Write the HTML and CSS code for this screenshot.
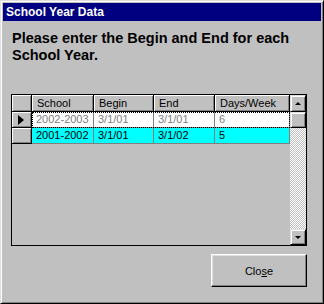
FILE: index.html
```html
<!DOCTYPE html>
<html lang="en">
<head>
  <meta charset="UTF-8">
  <title>School Year Data</title>
  <link rel="stylesheet" href="styles.css">
</head>
<body>
  <div class="window">
    <div class="title-bar">School Year Data</div>
    <div class="content">
      <p class="prompt">Please enter the Begin and End for each School Year.</p>
      <div class="grid-frame">
        <div class="grid">
          <div class="row head">
            <div class="selector"></div>
            <div class="cells">
              <div class="cell">School</div>
              <div class="cell">Begin</div>
              <div class="cell">End</div>
              <div class="cell">Days/Week</div>
            </div>
          </div>
          <div class="row current">
            <div class="selector"><span class="pointer"></span></div>
            <div class="cells">
              <div class="cell">2002-2003</div>
              <div class="cell">3/1/01</div>
              <div class="cell">3/1/01</div>
              <div class="cell">6</div>
            </div>
          </div>
          <div class="row selected">
            <div class="selector"></div>
            <div class="cells">
              <div class="cell">2001-2002</div>
              <div class="cell">3/1/01</div>
              <div class="cell">3/1/02</div>
              <div class="cell">5</div>
            </div>
          </div>
        </div>
        <div class="scrollbar">
          <div class="scroll-btn"><span class="arrow up"></span></div>
          <div class="scroll-thumb"></div>
          <div class="scroll-track"></div>
          <div class="scroll-btn"><span class="arrow down"></span></div>
        </div>
      </div>
      <div class="actions">
        <button class="btn">Clo<u>s</u>e</button>
      </div>
    </div>
  </div>
</body>
</html>
```

FILE: styles.css
```css
body {
  margin: 0;
  background-color: #c0c0c0;
  font-family: "Liberation Sans", Arial, sans-serif;
}

.window {
  width: 324px;
  height: 304px;
  box-sizing: border-box;
  border: 1px solid;
  border-color: #dfdfdf #000 #000 #dfdfdf;
  box-shadow: inset 1px 1px #fff, inset -1px -1px #808080;
  padding: 2px;
  display: flex;
  flex-direction: column;
}

.title-bar {
  height: 18px;
  background-color: #000080;
  color: #fff;
  font-weight: bold;
  font-size: 12px;
  line-height: 18px;
  padding-left: 3px;
}

.content {
  flex: 1;
  padding: 0 14px 0 8px;
  display: flex;
  flex-direction: column;
}

.prompt {
  margin: 9px 0 0 1px;
  font-size: 14.5px;
  font-weight: bold;
  line-height: 17px;
  color: #000;
  width: 290px;
}

.grid-frame {
  margin-top: 30px;
  height: 152px;
  box-sizing: border-box;
  border: 1px solid #000;
  display: flex;
}

.grid {
  flex: 1;
  font-size: 11px;
}

.row {
  display: flex;
  height: 16px;
}

.row.head {
  height: 17px;
}

.selector {
  width: 20px;
  box-sizing: border-box;
  background-color: #c0c0c0;
  border-right: 1px solid #000;
  border-bottom: 1px solid #000;
  box-shadow: inset 1px 1px #fff, inset -1px -1px #808080;
  display: flex;
  align-items: center;
  justify-content: center;
}

.pointer {
  width: 0;
  height: 0;
  border-top: 5px solid transparent;
  border-bottom: 5px solid transparent;
  border-left: 6px solid #000;
  margin-left: -2px;
}

.cells {
  display: grid;
  grid-template-columns: 62px 60px 61px 75px;
  box-sizing: border-box;
}

.cell {
  box-sizing: border-box;
  padding-left: 4px;
  line-height: 15px;
  border-right: 1px solid #808080;
  border-bottom: 1px solid #808080;
  white-space: nowrap;
  overflow: hidden;
}

.head .cell {
  padding-left: 5px;
  line-height: 17px;
  background-color: #c0c0c0;
  color: #000;
  border-right-color: #000;
  border-bottom-color: #000;
  box-shadow: inset 1px 1px #fff, inset -1px -1px #808080;
}

.current .cells {
  background-color: #fff;
  color: #808080;
  outline: 1px dotted #000;
  outline-offset: -1px;
}

.selected .cells {
  background-color: #00ffff;
  color: #000;
}

.scrollbar {
  width: 16px;
  display: flex;
  flex-direction: column;
}

.scroll-btn,
.scroll-thumb {
  height: 16px;
  box-sizing: border-box;
  background-color: #c0c0c0;
  border: 1px solid;
  border-color: #dfdfdf #000 #000 #dfdfdf;
  box-shadow: inset 1px 1px #fff, inset -1px -1px #808080;
  display: flex;
  align-items: center;
  justify-content: center;
}

.scroll-btn:first-child {
  height: 17px;
}

.scroll-track {
  flex: 1;
  background-color: #fff;
  background-image: repeating-conic-gradient(#c0c0c0 0 25%, #fff 0 50%);
  background-size: 2px 2px;
}

.arrow {
  width: 0;
  height: 0;
  border-left: 3px solid transparent;
  border-right: 3px solid transparent;
}

.arrow.up {
  border-bottom: 3px solid #000;
}

.arrow.down {
  border-top: 3px solid #000;
}

.actions {
  display: flex;
  justify-content: flex-end;
  margin-top: 8px;
}

.btn {
  width: 96px;
  height: 33px;
  font-family: "Liberation Sans", Arial, sans-serif;
  font-size: 11px;
  color: #000;
  background-color: #c0c0c0;
  border: 1px solid;
  border-color: #fff #000 #000 #fff;
  box-shadow: inset -1px -1px #808080, inset 1px 1px #dfdfdf;
  padding: 0;
}
```
